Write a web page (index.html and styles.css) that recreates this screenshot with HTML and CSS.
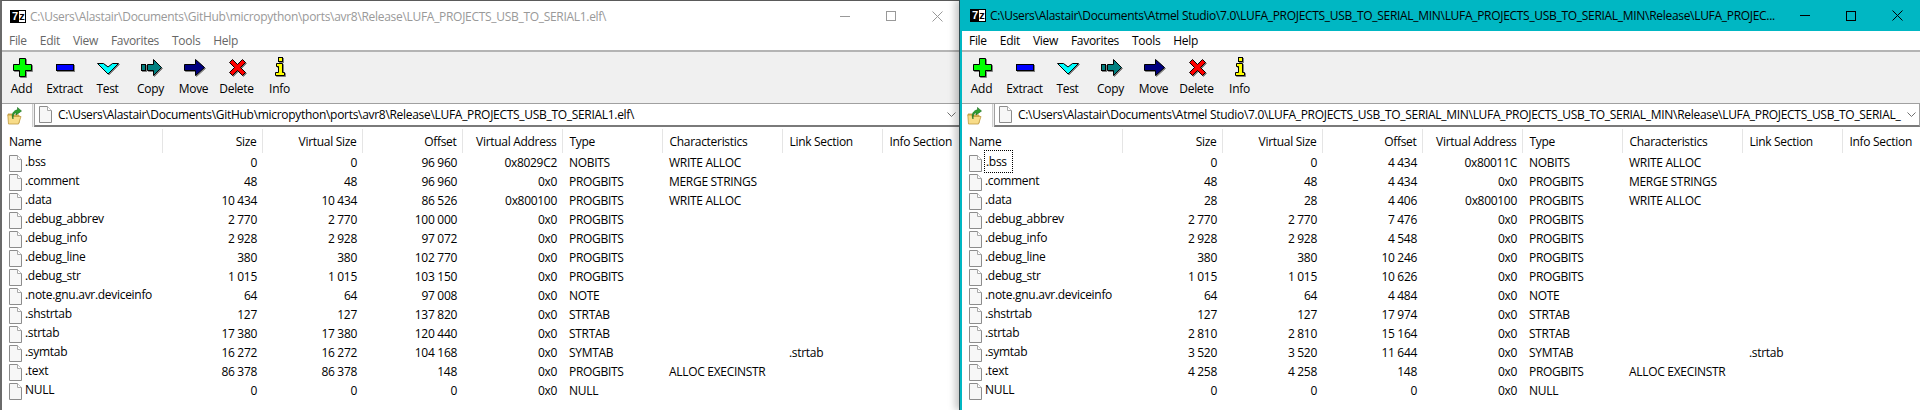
FILE: index.html
```html
<!DOCTYPE html>
<html>
	<head>
		<meta charset="UTF-8">
		<title>7-Zip</title>
		<link rel="stylesheet" href="styles.css">
	</head>
	<body>
		<!-- icons shared by both windows -->
		<svg class="defs" xmlns="http://www.w3.org/2000/svg">
			<symbol id="i-add" viewBox="0 0 24 24"><polygon fill="#00ff00" stroke="#000" points="9.5,2.5 15.5,2.5 15.5,8.5 21.5,8.5 21.5,14.5 15.5,14.5 15.5,20.5 9.5,20.5 9.5,14.5 3.5,14.5 3.5,8.5 9.5,8.5"/></symbol>
			<symbol id="i-extract" viewBox="0 0 24 24"><rect x="3.5" y="8.5" width="17" height="6" fill="#0000ff" stroke="#000"/></symbol>
			<symbol id="i-test" viewBox="0 0 24 24"><polygon fill="#00ffff" stroke="#000" points="1.5,7.5 7.5,7.5 12,11 16.5,7.5 22.5,7.5 12,18"/></symbol>
			<symbol id="i-copy" viewBox="0 0 24 24"><rect x="2.5" y="8.5" width="4" height="6" fill="#008080" stroke="#000"/><polygon fill="#008080" stroke="#000" points="8.5,8.5 14.5,8.5 14.5,3.5 22.5,11.5 14.5,19.5 14.5,14.5 8.5,14.5"/></symbol>
			<symbol id="i-move" viewBox="0 0 24 24"><polygon fill="#000080" stroke="#000" points="2.5,8.5 13.5,8.5 13.5,3.5 22.5,11.5 13.5,19.5 13.5,14.5 2.5,14.5"/></symbol>
			<symbol id="i-delete" viewBox="0 0 24 24"><polygon fill="#ff0000" stroke="#000" points="4.5,6.5 7.5,3.5 12.5,8.5 17.5,3.5 20.5,6.5 15.5,11.5 20.5,16.5 17.5,19.5 12.5,14.5 7.5,19.5 4.5,16.5 9.5,11.5"/></symbol>
			<symbol id="i-info" viewBox="0 0 24 24"><rect x="10.5" y="1.5" width="4" height="4" fill="#ffff00" stroke="#000"/><polygon fill="#ffff00" stroke="#000" points="8.5,7.5 14.5,7.5 14.5,16.5 16.5,16.5 16.5,19.5 7.5,19.5 7.5,16.5 10.5,16.5 10.5,10.5 8.5,10.5"/></symbol>
			<symbol id="i-file" viewBox="0 0 13 17"><path d="M.5.5H8.5L12.5 4.5V16.5H.5Z" fill="#f7f7f7" stroke="#8c8c8c"/><path d="M8.5.5V4.5H12.5" fill="#fff" stroke="#a8a8a8"/></symbol>
			<symbol id="i-up" viewBox="0 0 16 18"><path d="M1 7H5L6 8H12V16H3Z" fill="#e8c060" stroke="#b89030" stroke-width=".8"/><path d="M1.5 17L.8 8H5L6 9.5H14L11.5 17Z" fill="#f8dc88" stroke="#c09a40" stroke-width=".8"/><path d="M6 12C6 8 7 6 9 5.500V8L14.500 4 10.500 .5V2.800C6 3.500 4 8 6 12Z" fill="#2fa02f" stroke="#14681a" stroke-width=".6"/></symbol>
			<symbol id="i-chev" viewBox="0 0 9 5"><path d="M.5.5L4.500 4.500 8.500.5" fill="none" stroke="#707070"/></symbol>
		</svg>

		<div class="desktop">
			<!-- first window, inactive -->
			<div class="win win-off">
				<div class="titlebar">
					<span class="logo"><b>7</b><i>z</i></span>
					<span class="title">C:\Users\Alastair\Documents\GitHub\micropython\ports\avr8\Release\LUFA_PROJECTS_USB_TO_SERIAL1.elf\</span>
					<span class="ctl"><span class="ctl-min"></span></span>
					<span class="ctl"><span class="ctl-max"></span></span>
					<span class="ctl"><svg width="11" height="11" viewBox="0 0 11 11"><path d="M.5.5L10.500 10.500M10.500.5L.5 10.500" stroke="currentColor" fill="none"/></svg></span>
				</div>
				<div class="menu"><span>File</span><span>Edit</span><span>View</span><span>Favorites</span><span>Tools</span><span>Help</span></div>
				<div class="toolbar">
					<div class="btn"><svg class="ico"><use href="#i-add"/></svg>Add</div>
					<div class="btn"><svg class="ico"><use href="#i-extract"/></svg>Extract</div>
					<div class="btn"><svg class="ico"><use href="#i-test"/></svg>Test</div>
					<div class="btn"><svg class="ico"><use href="#i-copy"/></svg>Copy</div>
					<div class="btn"><svg class="ico"><use href="#i-move"/></svg>Move</div>
					<div class="btn"><svg class="ico"><use href="#i-delete"/></svg>Delete</div>
					<div class="btn"><svg class="ico"><use href="#i-info"/></svg>Info</div>
				</div>
				<div class="address">
					<div class="up"><svg class="up-ico"><use href="#i-up"/></svg></div>
					<div class="combo">
						<svg class="file-big"><use href="#i-file"/></svg>
						<span class="path">C:\Users\Alastair\Documents\GitHub\micropython\ports\avr8\Release\LUFA_PROJECTS_USB_TO_SERIAL1.elf\</span>
						<svg class="chev"><use href="#i-chev"/></svg>
					</div>
				</div>
				<div class="list">
					<table>
						<colgroup><col class="c-name"><col class="c-std"><col class="c-std"><col class="c-std"><col class="c-std"><col class="c-std"><col class="c-wide"><col class="c-std"><col class="c-std"></colgroup>
						<tr><th>Name</th><th class="r">Size</th><th class="r">Virtual Size</th><th class="r">Offset</th><th class="r">Virtual Address</th><th>Type</th><th>Characteristics</th><th>Link Section</th><th>Info Section</th></tr>
						<tr><td class="n"><svg class="file"><use href="#i-file"/></svg>.bss</td><td class="r">0</td><td class="r">0</td><td class="r">96 960</td><td class="r">0x8029C2</td><td>NOBITS</td><td>WRITE ALLOC</td><td></td><td></td></tr>
						<tr><td class="n"><svg class="file"><use href="#i-file"/></svg>.comment</td><td class="r">48</td><td class="r">48</td><td class="r">96 960</td><td class="r">0x0</td><td>PROGBITS</td><td>MERGE STRINGS</td><td></td><td></td></tr>
						<tr><td class="n"><svg class="file"><use href="#i-file"/></svg>.data</td><td class="r">10 434</td><td class="r">10 434</td><td class="r">86 526</td><td class="r">0x800100</td><td>PROGBITS</td><td>WRITE ALLOC</td><td></td><td></td></tr>
						<tr><td class="n"><svg class="file"><use href="#i-file"/></svg>.debug_abbrev</td><td class="r">2 770</td><td class="r">2 770</td><td class="r">100 000</td><td class="r">0x0</td><td>PROGBITS</td><td></td><td></td><td></td></tr>
						<tr><td class="n"><svg class="file"><use href="#i-file"/></svg>.debug_info</td><td class="r">2 928</td><td class="r">2 928</td><td class="r">97 072</td><td class="r">0x0</td><td>PROGBITS</td><td></td><td></td><td></td></tr>
						<tr><td class="n"><svg class="file"><use href="#i-file"/></svg>.debug_line</td><td class="r">380</td><td class="r">380</td><td class="r">102 770</td><td class="r">0x0</td><td>PROGBITS</td><td></td><td></td><td></td></tr>
						<tr><td class="n"><svg class="file"><use href="#i-file"/></svg>.debug_str</td><td class="r">1 015</td><td class="r">1 015</td><td class="r">103 150</td><td class="r">0x0</td><td>PROGBITS</td><td></td><td></td><td></td></tr>
						<tr><td class="n"><svg class="file"><use href="#i-file"/></svg>.note.gnu.avr.deviceinfo</td><td class="r">64</td><td class="r">64</td><td class="r">97 008</td><td class="r">0x0</td><td>NOTE</td><td></td><td></td><td></td></tr>
						<tr><td class="n"><svg class="file"><use href="#i-file"/></svg>.shstrtab</td><td class="r">127</td><td class="r">127</td><td class="r">137 820</td><td class="r">0x0</td><td>STRTAB</td><td></td><td></td><td></td></tr>
						<tr><td class="n"><svg class="file"><use href="#i-file"/></svg>.strtab</td><td class="r">17 380</td><td class="r">17 380</td><td class="r">120 440</td><td class="r">0x0</td><td>STRTAB</td><td></td><td></td><td></td></tr>
						<tr><td class="n"><svg class="file"><use href="#i-file"/></svg>.symtab</td><td class="r">16 272</td><td class="r">16 272</td><td class="r">104 168</td><td class="r">0x0</td><td>SYMTAB</td><td></td><td>.strtab</td><td></td></tr>
						<tr><td class="n"><svg class="file"><use href="#i-file"/></svg>.text</td><td class="r">86 378</td><td class="r">86 378</td><td class="r">148</td><td class="r">0x0</td><td>PROGBITS</td><td>ALLOC EXECINSTR</td><td></td><td></td></tr>
						<tr><td class="n"><svg class="file"><use href="#i-file"/></svg>NULL</td><td class="r">0</td><td class="r">0</td><td class="r">0</td><td class="r">0x0</td><td>NULL</td><td></td><td></td><td></td></tr>
					</table>
				</div>
			</div>

			<!-- second window, active -->
			<div class="win win-on">
				<div class="titlebar">
					<span class="logo"><b>7</b><i>z</i></span>
					<span class="title">C:\Users\Alastair\Documents\Atmel Studio\7.0\LUFA_PROJECTS_USB_TO_SERIAL_MIN\LUFA_PROJECTS_USB_TO_SERIAL_MIN\Release\LUFA_PROJEC...</span>
					<span class="ctl"><span class="ctl-min"></span></span>
					<span class="ctl"><span class="ctl-max"></span></span>
					<span class="ctl"><svg width="11" height="11" viewBox="0 0 11 11"><path d="M.5.5L10.500 10.500M10.500.5L.5 10.500" stroke="currentColor" fill="none"/></svg></span>
				</div>
				<div class="menu"><span>File</span><span>Edit</span><span>View</span><span>Favorites</span><span>Tools</span><span>Help</span></div>
				<div class="toolbar">
					<div class="btn"><svg class="ico"><use href="#i-add"/></svg>Add</div>
					<div class="btn"><svg class="ico"><use href="#i-extract"/></svg>Extract</div>
					<div class="btn"><svg class="ico"><use href="#i-test"/></svg>Test</div>
					<div class="btn"><svg class="ico"><use href="#i-copy"/></svg>Copy</div>
					<div class="btn"><svg class="ico"><use href="#i-move"/></svg>Move</div>
					<div class="btn"><svg class="ico"><use href="#i-delete"/></svg>Delete</div>
					<div class="btn"><svg class="ico"><use href="#i-info"/></svg>Info</div>
				</div>
				<div class="address">
					<div class="up"><svg class="up-ico"><use href="#i-up"/></svg></div>
					<div class="combo">
						<svg class="file-big"><use href="#i-file"/></svg>
						<span class="path">C:\Users\Alastair\Documents\Atmel Studio\7.0\LUFA_PROJECTS_USB_TO_SERIAL_MIN\LUFA_PROJECTS_USB_TO_SERIAL_MIN\Release\LUFA_PROJECTS_USB_TO_SERIAL_</span>
						<svg class="chev"><use href="#i-chev"/></svg>
					</div>
				</div>
				<div class="list">
					<table>
						<colgroup><col class="c-name"><col class="c-std"><col class="c-std"><col class="c-std"><col class="c-std"><col class="c-std"><col class="c-wide"><col class="c-std"><col class="c-std"></colgroup>
						<tr><th>Name</th><th class="r">Size</th><th class="r">Virtual Size</th><th class="r">Offset</th><th class="r">Virtual Address</th><th>Type</th><th>Characteristics</th><th>Link Section</th><th>Info Section</th></tr>
						<tr><td class="n"><svg class="file"><use href="#i-file"/></svg><span class="focus">.bss</span></td><td class="r">0</td><td class="r">0</td><td class="r">4 434</td><td class="r">0x80011C</td><td>NOBITS</td><td>WRITE ALLOC</td><td></td><td></td></tr>
						<tr><td class="n"><svg class="file"><use href="#i-file"/></svg>.comment</td><td class="r">48</td><td class="r">48</td><td class="r">4 434</td><td class="r">0x0</td><td>PROGBITS</td><td>MERGE STRINGS</td><td></td><td></td></tr>
						<tr><td class="n"><svg class="file"><use href="#i-file"/></svg>.data</td><td class="r">28</td><td class="r">28</td><td class="r">4 406</td><td class="r">0x800100</td><td>PROGBITS</td><td>WRITE ALLOC</td><td></td><td></td></tr>
						<tr><td class="n"><svg class="file"><use href="#i-file"/></svg>.debug_abbrev</td><td class="r">2 770</td><td class="r">2 770</td><td class="r">7 476</td><td class="r">0x0</td><td>PROGBITS</td><td></td><td></td><td></td></tr>
						<tr><td class="n"><svg class="file"><use href="#i-file"/></svg>.debug_info</td><td class="r">2 928</td><td class="r">2 928</td><td class="r">4 548</td><td class="r">0x0</td><td>PROGBITS</td><td></td><td></td><td></td></tr>
						<tr><td class="n"><svg class="file"><use href="#i-file"/></svg>.debug_line</td><td class="r">380</td><td class="r">380</td><td class="r">10 246</td><td class="r">0x0</td><td>PROGBITS</td><td></td><td></td><td></td></tr>
						<tr><td class="n"><svg class="file"><use href="#i-file"/></svg>.debug_str</td><td class="r">1 015</td><td class="r">1 015</td><td class="r">10 626</td><td class="r">0x0</td><td>PROGBITS</td><td></td><td></td><td></td></tr>
						<tr><td class="n"><svg class="file"><use href="#i-file"/></svg>.note.gnu.avr.deviceinfo</td><td class="r">64</td><td class="r">64</td><td class="r">4 484</td><td class="r">0x0</td><td>NOTE</td><td></td><td></td><td></td></tr>
						<tr><td class="n"><svg class="file"><use href="#i-file"/></svg>.shstrtab</td><td class="r">127</td><td class="r">127</td><td class="r">17 974</td><td class="r">0x0</td><td>STRTAB</td><td></td><td></td><td></td></tr>
						<tr><td class="n"><svg class="file"><use href="#i-file"/></svg>.strtab</td><td class="r">2 810</td><td class="r">2 810</td><td class="r">15 164</td><td class="r">0x0</td><td>STRTAB</td><td></td><td></td><td></td></tr>
						<tr><td class="n"><svg class="file"><use href="#i-file"/></svg>.symtab</td><td class="r">3 520</td><td class="r">3 520</td><td class="r">11 644</td><td class="r">0x0</td><td>SYMTAB</td><td></td><td>.strtab</td><td></td></tr>
						<tr><td class="n"><svg class="file"><use href="#i-file"/></svg>.text</td><td class="r">4 258</td><td class="r">4 258</td><td class="r">148</td><td class="r">0x0</td><td>PROGBITS</td><td>ALLOC EXECINSTR</td><td></td><td></td></tr>
						<tr><td class="n"><svg class="file"><use href="#i-file"/></svg>NULL</td><td class="r">0</td><td class="r">0</td><td class="r">0</td><td class="r">0x0</td><td>NULL</td><td></td><td></td><td></td></tr>
					</table>
				</div>
			</div>
		</div>
	</body>
</html>
```

FILE: styles.css
```css
*{
	margin: 0;
	padding: 0;
	box-sizing: border-box;
}
html, body{
	height: 410px;
	overflow: hidden;
	background-color: #fff;
}
body{
	font-family: "Open Sans", "Liberation Sans", sans-serif;
	font-size: 12px;
	letter-spacing: -0.3px;
	color: #000;
}
.defs{
	position: absolute;
	width: 0;
	height: 0;
}
.desktop{
	display: flex;
	height: 410px;
}
.win{
	width: 960px;
	height: 410px;
	display: flex;
	flex-direction: column;
	overflow: hidden;
	background-color: #fff;
}
.win-off{
	border-left: 2px solid #6a6a6a;
	border-top: 1px solid #5a5a5a;
}
.win-on{
	border-left: 2px solid #00b7c3;
	/* the active window throws its shadow on the other one */
	box-shadow: -1px 0 0 #2f4a50, -5px 0 7px rgba(0,0,0,0.22);
	z-index: 1;
}

/* title bar */
.titlebar{
	height: 31px;
	flex: none;
	display: flex;
	align-items: center;
	background-color: #fff;
	color: #999;
}
.win-off .titlebar{
	height: 30px;
}
.win-on .titlebar{
	background-color: #00b7c3;
	color: #000;
}
.logo{
	display: flex;
	width: 16px;
	height: 13px;
	margin-left: 8px;
	margin-right: 4px;
	border: 1px solid #000;
	font-family: "Liberation Sans", sans-serif;
	font-size: 11px;
	line-height: 11px;
	letter-spacing: 0;
	text-align: center;
	overflow: hidden;
	flex: none;
}
.logo b{
	width: 8px;
	background-color: #000;
	color: #fff;
}
.logo i{
	width: 6px;
	font-style: normal;
	font-weight: bold;
	background-color: #fff;
	color: #000;
}
.title{
	flex: 1;
	white-space: nowrap;
	overflow: hidden;
}
.ctl{
	width: 46px;
	height: 100%;
	flex: none;
	display: flex;
	align-items: center;
	justify-content: center;
}
.win-off .ctl{
	color: #999;
}
.ctl-min{
	width: 10px;
	height: 1px;
	background-color: currentColor;
}
.ctl-max{
	width: 10px;
	height: 10px;
	border: 1px solid currentColor;
}

/* menu */
.menu{
	height: 19px;
	flex: none;
	display: flex;
	align-items: center;
	gap: 13px;
	padding-left: 7px;
}
.win-off .menu{
	color: #666;
}

/* toolbar */
.toolbar{
	height: 54px;
	flex: none;
	display: flex;
	padding-top: 4px;
	background-color: #f0f0f0;
	border-top: 2px solid #b4b4b4;
	border-bottom: 1px solid #a0a0a0;
}
.btn{
	width: 43px;
	flex: none;
	display: flex;
	flex-direction: column;
	align-items: center;
	color: #000;
	line-height: 18px;
}
.btn:first-child{
	margin-left: -2px;
}
.ico{
	width: 24px;
	height: 24px;
	margin-left: 1px;
	flex: none;
	/* 7-zip's icons have a hard grey shadow */
	filter: drop-shadow(1px 1px 0 #808080);
}

/* address bar */
.address{
	height: 23px;
	flex: none;
	display: flex;
	background-color: #f0f0f0;
}
.up{
	width: 31px;
	flex: none;
	background-color: #fff;
	border-right: 1px solid #d0d0d0;
	display: flex;
	align-items: center;
	padding-left: 5px;
}
.up-ico{
	width: 16px;
	height: 18px;
}
.combo{
	flex: 1;
	min-width: 0;
	margin-left: 1px;
	display: flex;
	align-items: center;
	background-color: #fff;
	border: 1px solid #a0a0a0;
	border-top: 0;
	border-bottom: 2px solid #7a7a7a;
	padding-left: 4px;
}
.file-big{
	width: 13px;
	height: 17px;
	flex: none;
	margin-right: 6px;
}
.path{
	flex: 1;
	white-space: nowrap;
	overflow: hidden;
}
.chev{
	width: 9px;
	height: 5px;
	flex: none;
	margin: 0 3px 0 5px;
}

/* list view */
.list{
	flex: 1;
	padding-top: 2px;
	overflow: hidden;
}
table{
	width: 980px;
	table-layout: fixed;
	border-collapse: collapse;
}
.c-name{
	width: 160px;
}
.c-std{
	width: 100px;
}
.c-wide{
	width: 120px;
}
th{
	height: 24px;
	font-weight: normal;
	text-align: left;
	padding: 0 5px 0 7px;
	border-right: 1px solid #e5e5e5;
	white-space: nowrap;
}
td{
	height: 19px;
	padding: 0 5px 0 7px;
	white-space: nowrap;
}
.r{
	text-align: right;
}
.file{
	width: 13px;
	height: 17px;
	margin-right: 3px;
	vertical-align: middle;
}
.focus{
	outline: 1px dotted #000;
	padding: 2px 5px 2px 1px;
}
```
